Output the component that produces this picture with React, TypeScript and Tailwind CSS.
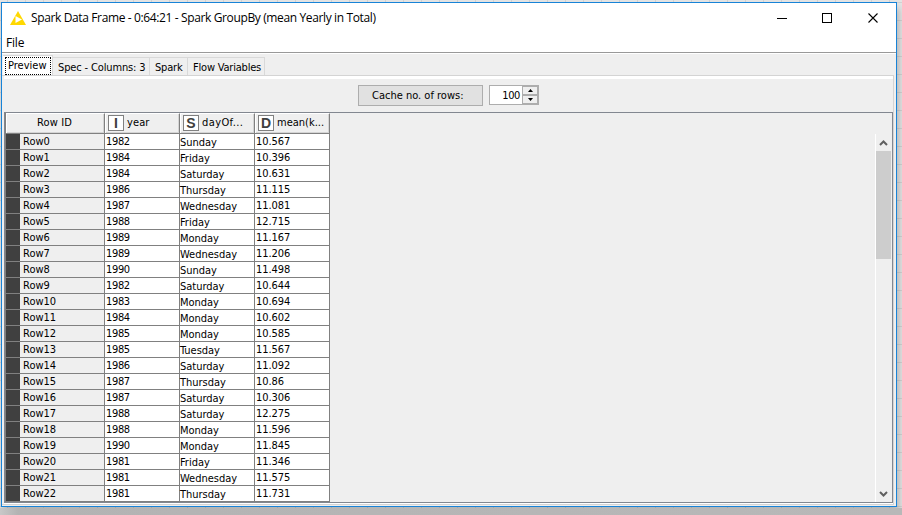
import type { ReactNode } from "react";

const rows: [string, string, string][] = [
  ["1982", "Sunday", "10.567"],
  ["1984", "Friday", "10.396"],
  ["1984", "Saturday", "10.631"],
  ["1986", "Thursday", "11.115"],
  ["1987", "Wednesday", "11.081"],
  ["1988", "Friday", "12.715"],
  ["1989", "Monday", "11.167"],
  ["1989", "Wednesday", "11.206"],
  ["1990", "Sunday", "11.498"],
  ["1982", "Saturday", "10.644"],
  ["1983", "Monday", "10.694"],
  ["1984", "Monday", "10.602"],
  ["1985", "Monday", "10.585"],
  ["1985", "Tuesday", "11.567"],
  ["1986", "Saturday", "11.092"],
  ["1987", "Thursday", "10.86"],
  ["1987", "Saturday", "10.306"],
  ["1988", "Saturday", "12.275"],
  ["1988", "Monday", "11.596"],
  ["1990", "Monday", "11.845"],
  ["1981", "Friday", "11.346"],
  ["1981", "Wednesday", "11.575"],
  ["1981", "Thursday", "11.731"],
];

function TitleBar() {
  return (
    <div className="flex h-[30px] shrink-0 items-center bg-white font-['Open_Sans','Noto_Sans',sans-serif] text-[12px] text-black">
      <svg className="ml-[8px] h-[14px] w-[16px]" viewBox="0 0 16 14">
        <path d="M8 0 16 14H0Z" fill="#ffd800" />
        <path d="M5.5 5 12 8.5 5.5 12Z" fill="#fff" />
      </svg>
      <span className="ml-[5px] whitespace-nowrap tracking-[-0.37px]">
        Spark Data Frame - 0:64:21 - Spark GroupBy (mean Yearly in Total)
      </span>
      <svg className="ml-auto mr-[17px] h-[11px] w-[102px]" viewBox="0 0 102 11" fill="none" stroke="#000" shapeRendering="crispEdges">
        <path d="M0 5.5h10M45.5 .5h9v9h-9z" />
        <path d="M91.5 .5l9 9m0-9l-9 9" shapeRendering="auto" strokeWidth="1.1" />
      </svg>
    </div>
  );
}

function Tab({ className, children }: { className: string; children: ReactNode }) {
  return (
    <div className={`h-[18px] whitespace-nowrap border-t border-r border-[#d9d9d9] pt-[1px] leading-[17px] ${className}`}>
      {children}
    </div>
  );
}

function HeaderCell({ type, label, className }: { type: string; label: string; className: string }) {
  return (
    <div className="flex h-[20px] w-[75px] shrink-0 items-start border-t border-r border-t-white border-r-[#808080] pt-[1px] pl-[3px] shadow-[inset_1px_0_#fff,inset_-1px_-1px_#d4d4d4]">
      <span className="flex size-[16px] shrink-0 items-center justify-center border border-[#808080] bg-white font-['Liberation_Sans',sans-serif] text-[14px] leading-none font-bold text-[#404040]">
        {type}
      </span>
      <span className={`ml-[3px] leading-[16px] whitespace-nowrap ${className}`}>{label}</span>
    </div>
  );
}

function DataTable() {
  return (
    <div className="flex w-[325px] shrink-0 flex-col border-l border-[#808080]">
      <div className="flex h-[21px] border-b border-[#808080]">
        <div className="h-[20px] w-[99px] border-t border-r border-t-white border-r-[#808080] pr-[1px] text-center leading-[18px] tracking-[0.1px] shadow-[inset_1px_0_#fff,inset_-1px_-1px_#d4d4d4]">
          Row ID
        </div>
        <HeaderCell type="I" label="year" className="tracking-[0.1px]" />
        <HeaderCell type="S" label="dayOf..." className="tracking-[0.4px]" />
        <HeaderCell type="D" label="mean(k..." className="tracking-[0px]" />
      </div>
      {rows.map(([year, day, mean], i) => (
        <div key={i} className="flex h-[16px] border-b border-[#808080] leading-[15px]">
          <div className="h-[15px] w-[14px] bg-[#404040]" />
          <div className="w-[85px] border-r border-[#808080] pl-[3px] tracking-[0px]">Row{i}</div>
          <div className="w-[75px] border-r border-[#808080] bg-white pl-[1px] tracking-[-0.35px]">{year}</div>
          <div className="w-[75px] border-r border-[#808080] bg-white pt-[1px] tracking-[-0.02px]">{day}</div>
          <div className="w-[75px] border-r border-[#808080] bg-white pl-[1px] tracking-[-0.05px]">{mean}</div>
        </div>
      ))}
    </div>
  );
}

function ScrollBar() {
  return (
    <div className="mt-[21px] ml-auto flex w-[17px] flex-col border-l border-white pr-[1px]">
      <svg className="h-[17px] w-[15px] shrink-0" viewBox="0 0 15 17" fill="none" stroke="#606060" strokeWidth="2">
        <path d="M4 11 7.5 7.5 11 11" />
      </svg>
      <div className="h-[108px] bg-[#cdcdcd]" />
      <svg className="mt-auto h-[17px] w-[15px] shrink-0" viewBox="0 0 15 17" fill="none" stroke="#606060" strokeWidth="2">
        <path d="M4 7 7.5 10.5 11 7" />
      </svg>
    </div>
  );
}

export default function App() {
  return (
    <div className="flex h-[515px] w-[902px] flex-col overflow-hidden bg-[#e4e4e4] bg-[linear-gradient(to_right,#d2d2d2_1px,transparent_1px),linear-gradient(to_bottom,#d2d2d2_1px,transparent_1px)] bg-[length:18px_18px] bg-[position:7px_2px] pt-[2px]">
      <div className="ml-[1px] flex h-[505px] w-[896px] shrink-0 flex-col border border-[#1883d7] bg-[#efefef] font-['DejaVu_Sans_Condensed','DejaVu_Sans',sans-serif] text-[11px] text-black shadow-[2px_6px_7px_0px_rgba(0,0,0,0.22)]">
        <TitleBar />
        <div className="h-[20px] shrink-0 border-b border-[#999999] bg-white pl-[4px] font-['Open_Sans','Noto_Sans',sans-serif] text-[12px] leading-[19px] tracking-[-0.2px]">
          File
        </div>
        <div className="flex h-[22px] shrink-0 items-end border-t border-white pl-[1px] tracking-[-0.2px]">
          <div className="h-[20px] w-[50px] border-t border-r border-[#d9d9d9] bg-white pt-[1px] pl-[2px]">
            <div className="h-[18px] w-[46px] border border-dotted border-black pl-[2px] leading-[15px] tracking-[0px]">
              Preview
            </div>
          </div>
          <Tab className="w-[97px] pl-[5px] tracking-[-0.14px]">Spec - Columns: 3</Tab>
          <Tab className="w-[38px] pl-[5px]">Spark</Tab>
          <Tab className="w-[77px] pl-[5px]">Flow Variables</Tab>
        </div>
        <div className="mr-[2px] mb-[1px] flex min-h-0 flex-1 flex-col border-t border-r border-b border-[#d4d4d4] pl-[2px]">
          <div className="h-[3px] shrink-0 bg-white" />
          <div className="flex h-[33px] shrink-0 items-start pt-[6px] pl-[354px]">
            <div className="h-[21px] w-[125px] border border-[#adadad] bg-[#e1e1e1] pl-[13px] leading-[19px] whitespace-nowrap">
              Cache no. of rows:
            </div>
            <div className="ml-[6px] flex h-[20px] w-[50px] border border-[#adadad] bg-white">
              <span className="w-[32px] pr-[2px] text-right leading-[19px] tracking-[-0.4px]">100</span>
              <div className="flex w-[16px] flex-col justify-between">
                <div className="flex h-[9px] items-center justify-center border border-[#adadad] bg-[#efefef]">
                  <svg className="h-[3px] w-[5px]" viewBox="0 0 5 3"><path d="M2.5 0 5 3H0Z" /></svg>
                </div>
                <div className="flex h-[9px] items-center justify-center border border-[#adadad] bg-[#efefef]">
                  <svg className="h-[3px] w-[5px]" viewBox="0 0 5 3"><path d="M0 0h5L2.5 3Z" /></svg>
                </div>
              </div>
            </div>
          </div>
          <div className="flex min-h-0 flex-1 border border-[#828790]">
            <DataTable />
            <ScrollBar />
          </div>
          <div className="h-[1px] shrink-0 bg-white" />
        </div>
      </div>
      <div className="mt-[1px] h-[7px] shrink-0 bg-linear-to-r from-[#c8c8c8] via-[#b3b3b3] via-2% to-[#b8b8b8]" />
    </div>
  );
}
